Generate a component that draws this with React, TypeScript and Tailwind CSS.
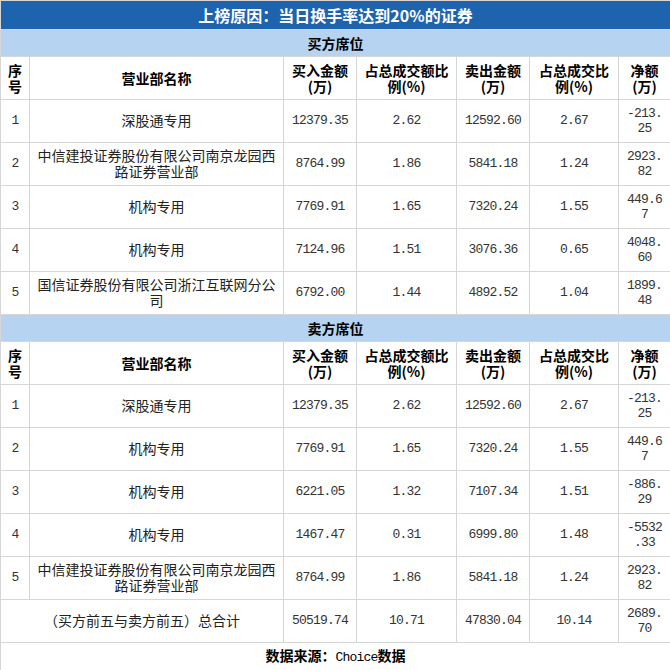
import React from 'react';

type Row = {
  no: string;
  name: string[];
  buy: string;
  buyPct: string;
  sell: string;
  sellPct: string;
  net: string;
};

const buyRows: Row[] = [
  { no: '1', name: ['深股通专用'], buy: '12379.35', buyPct: '2.62', sell: '12592.60', sellPct: '2.67', net: '-213.25' },
  { no: '2', name: ['中信建投证券股份有限公司南京龙园西', '路证券营业部'], buy: '8764.99', buyPct: '1.86', sell: '5841.18', sellPct: '1.24', net: '2923.82' },
  { no: '3', name: ['机构专用'], buy: '7769.91', buyPct: '1.65', sell: '7320.24', sellPct: '1.55', net: '449.67' },
  { no: '4', name: ['机构专用'], buy: '7124.96', buyPct: '1.51', sell: '3076.36', sellPct: '0.65', net: '4048.60' },
  { no: '5', name: ['国信证券股份有限公司浙江互联网分公', '司'], buy: '6792.00', buyPct: '1.44', sell: '4892.52', sellPct: '1.04', net: '1899.48' },
];

const sellRows: Row[] = [
  { no: '1', name: ['深股通专用'], buy: '12379.35', buyPct: '2.62', sell: '12592.60', sellPct: '2.67', net: '-213.25' },
  { no: '2', name: ['机构专用'], buy: '7769.91', buyPct: '1.65', sell: '7320.24', sellPct: '1.55', net: '449.67' },
  { no: '3', name: ['机构专用'], buy: '6221.05', buyPct: '1.32', sell: '7107.34', sellPct: '1.51', net: '-886.29' },
  { no: '4', name: ['机构专用'], buy: '1467.47', buyPct: '0.31', sell: '6999.80', sellPct: '1.48', net: '-5532.33' },
  { no: '5', name: ['中信建投证券股份有限公司南京龙园西', '路证券营业部'], buy: '8764.99', buyPct: '1.86', sell: '5841.18', sellPct: '1.24', net: '2923.82' },
];

const cjk = "font-['Noto_Sans_CJK_SC',sans-serif]";
const num = "font-['Liberation_Mono','Noto_Sans_CJK_SC',monospace] text-[13px] tracking-[-0.8px] text-[#333]";
const cell = 'border border-[#d6d6d6] text-center align-middle p-0';

// narrow net column wraps every 5 chars
function Net({ value }: { value: string }) {
  const parts: string[] = [];
  for (let i = 0; i < value.length; i += 5) parts.push(value.slice(i, i + 5));
  return (
    <td className={`${cell} ${num} leading-[15px]`}>
      {parts.map((p, i) => (
        <div key={i}>{p}</div>
      ))}
    </td>
  );
}

function HeaderRow() {
  const h = `${cell} ${cjk} text-[14px] font-bold leading-[16px] text-black`;
  return (
    <tr className="h-[43px]">
      <th className={h}>序<br />号</th>
      <th className={h}>营业部名称</th>
      <th className={h}>买入金额<br />(万)</th>
      <th className={h}>占总成交额比<br />例(%)</th>
      <th className={h}>卖出金额<br />(万)</th>
      <th className={h}>占总成交比<br />例(%)</th>
      <th className={h}>净额<br />(万)</th>
    </tr>
  );
}

function DataRow({ r }: { r: Row }) {
  return (
    <tr className="h-[43px]">
      <td className={`${cell} ${num}`}>{r.no}</td>
      <td className={`${cell} ${cjk} text-[14px] leading-[16px] text-[#222] pb-[2px]`}>
        {r.name.map((n, i) => (
          <div key={i}>{n}</div>
        ))}
      </td>
      <td className={`${cell} ${num}`}>{r.buy}</td>
      <td className={`${cell} ${num}`}>{r.buyPct}</td>
      <td className={`${cell} ${num}`}>{r.sell}</td>
      <td className={`${cell} ${num}`}>{r.sellPct}</td>
      <Net value={r.net} />
    </tr>
  );
}

function SectionRow({ title }: { title: string }) {
  return (
    <tr className="h-[27px]">
      <td colSpan={7} className={`${cell} bg-[#b6d4f1] ${cjk} text-[14px] font-bold text-black`}>
        {title}
      </td>
    </tr>
  );
}

export default function App() {
  return (
    <div className="w-[670px] h-[670px] bg-white overflow-hidden">
      <table className="w-[670px] table-fixed border-collapse">
        <colgroup>
          <col className="w-[29px]" />
          <col className="w-[254px]" />
          <col className="w-[73px]" />
          <col className="w-[100px]" />
          <col className="w-[73px]" />
          <col className="w-[89px]" />
          <col className="w-[52px]" />
        </colgroup>
        <tbody>
          <tr className="h-[29px]">
            <td colSpan={7} className={`${cell} bg-[#1d63ae] ${cjk} text-[16px] font-bold text-white`}>
              上榜原因：当日换手率达到20%的证券
            </td>
          </tr>
          <SectionRow title="买方席位" />
          <HeaderRow />
          {buyRows.map((r) => (
            <DataRow key={'b' + r.no} r={r} />
          ))}
          <SectionRow title="卖方席位" />
          <HeaderRow />
          {sellRows.map((r) => (
            <DataRow key={'s' + r.no} r={r} />
          ))}
          <tr className="h-[43px]">
            <td colSpan={2} className={`${cell} ${cjk} text-[14px] text-[#222] pb-[2px]`}>
              （买方前五与卖方前五）总合计
            </td>
            <td className={`${cell} ${num}`}>50519.74</td>
            <td className={`${cell} ${num}`}>10.71</td>
            <td className={`${cell} ${num}`}>47830.04</td>
            <td className={`${cell} ${num}`}>10.14</td>
            <Net value="2689.70" />
          </tr>
          <tr className="h-[28px]">
            <td colSpan={7} className={`${cell} ${cjk} text-[14px] font-bold text-black`}>
              数据来源：<span className="font-['Liberation_Mono',monospace] font-normal text-[13px] tracking-[-0.8px]">Choice</span>数据
            </td>
          </tr>
        </tbody>
      </table>
    </div>
  );
}
